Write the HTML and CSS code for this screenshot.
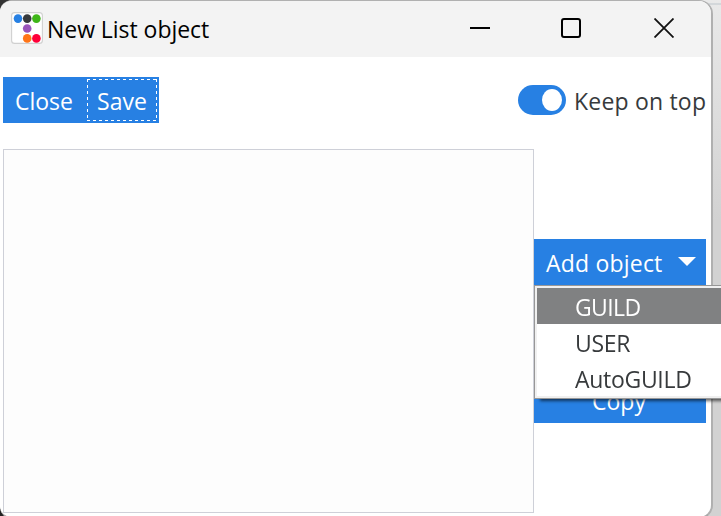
FILE: index.html
```html
<!DOCTYPE html>
<html lang="en">
<head>
<meta charset="utf-8">
<title>New List object</title>
<link rel="stylesheet" href="styles.css">
</head>
<body>
<div class="window">
  <header class="titlebar">
    <svg class="logo" width="32" height="32" viewBox="0 0 32 32">
      <rect x=".6" y=".6" width="30.8" height="30.8" rx="3" fill="#fff" stroke="#d0d0d0" stroke-width="1.1"/>
      <circle cx="7" cy="6.6" r="4.3" fill="#2780e3"/>
      <circle cx="16.2" cy="6.6" r="4.3" fill="#373a3c"/>
      <circle cx="25.4" cy="6.6" r="4.3" fill="#3fb618"/>
      <circle cx="16.2" cy="16.5" r="4.3" fill="#9954bb"/>
      <circle cx="16.2" cy="26.4" r="4.3" fill="#ff7518"/>
      <circle cx="25.4" cy="26.4" r="4.3" fill="#ff0039"/>
    </svg>
    <h1 class="title">New List object</h1>
    <div class="controls">
      <svg width="20" height="20" viewBox="0 0 20 20"><path d="M0 10H20" stroke="#000" stroke-width="2"/></svg>
      <svg width="20" height="20" viewBox="0 0 20 20"><rect x="1" y="1" width="18" height="18" rx="2" fill="none" stroke="#000" stroke-width="2"/></svg>
      <svg width="20" height="20" viewBox="0 0 20 20"><path d="M.5 .5L19.5 19.5M19.5 .5L.5 19.5" stroke="#111" stroke-width="1.8"/></svg>
    </div>
  </header>
  <div class="toolbar">
    <button class="btn close">Close</button>
    <button class="btn save"><span class="focus">Save</span></button>
    <label class="toggle"><span class="switch"><span class="knob"></span></span><span class="keep">Keep on top</span></label>
  </div>
  <main class="content">
    <div class="list"></div>
    <div class="actions">
      <div class="dropdown">
        <button class="btn add"><span class="add-text">Add object</span><svg width="18" height="9" viewBox="0 0 18 9"><path d="M0 0H18L9 9Z" fill="#fff"/></svg></button>
        <div class="menu">
          <div class="item active"><span class="guild">GUILD</span></div>
          <div class="item"><span class="user">USER</span></div>
          <div class="item"><span class="auto">AutoGUILD</span></div>
        </div>
      </div>
      <button class="btn copy">Copy</button>
    </div>
  </main>
</div>
</body>
</html>
```

FILE: styles.css
```css
* { box-sizing: border-box; }
body {
  margin: 0;
  width: 721px;
  height: 516px;
  overflow: hidden;
  background:
    linear-gradient(#d3d7da, #d3d7da) 700px 3px / 21px 2px no-repeat,
    linear-gradient(90deg, #333 412px, transparent 412px) 0 0 / 100% 10px no-repeat,
    linear-gradient(#222, #222) 0 500px / 20px 16px no-repeat,
    linear-gradient(#e9e9e9, #d2d2d2 220px);
  font-family: "Open Sans", "Noto Sans", sans-serif;
  font-size: 23px;
  color: #373a3c;
}
.window {
  width: 713px;
  height: 519px;
  border-right: 2px solid #b0b0b0;
  border-top: 1px solid #b0b0b0;
  border-bottom: 2px solid #a8a8a8;
  border-radius: 12px 14px 14px 12px;
  overflow: hidden;
  background: #fff;
  position: relative;
}
.window::before {
  content: "";
  position: absolute;
  left: 0;
  top: -1px;
  width: 412px;
  height: 1px;
  background: #333;
}
.titlebar {
  height: 56px;
  background: #f3f3f3;
  display: flex;
  align-items: flex-start;
  padding: 11px 37px 0 11px;
}
.logo { flex: none; }
.title {
  margin: 1px 0 0 4px;
  font-size: 23px;
  font-weight: 400;
  line-height: 32px;
  letter-spacing: -.04px;
  color: #000;
  white-space: nowrap;
}
.controls { display: flex; gap: 71px; margin: 6px 0 0 auto; }
.controls svg:last-child { margin-left: 2px; }
.toolbar { display: flex; height: 46px; margin: 20px 5px 0 3px; }
.btn {
  border: 0;
  border-radius: 0;
  padding: 0;
  background: #2780e3;
  color: #fff;
  font: inherit;
  line-height: 46px;
  text-align: center;
  white-space: nowrap;
}
.close { width: 82px; padding-top: 1px; }
.save { width: 74px; padding: 2px; }
.focus {
  --across: repeating-linear-gradient(90deg, #fff 0 3px, transparent 3px 6px);
  --down: repeating-linear-gradient(#fff 0 3px, transparent 3px 6px);
  display: block;
  width: 70px;
  height: 42px;
  line-height: 44px;
  background:
    var(--across) 0 0 / 100% 1px no-repeat,
    var(--across) 0 100% / 100% 1px no-repeat,
    var(--down) 0 0 / 1px 100% no-repeat,
    var(--down) 100% 0 / 1px 100% no-repeat;
}
.toggle { display: flex; margin-left: auto; align-items: flex-start; }
.switch {
  width: 48px;
  height: 30px;
  margin: 8px 8px 0 0;
  border-radius: 15px;
  background: #2780e3;
  display: flex;
  justify-content: flex-end;
  padding: 4px;
}
.knob { width: 20px; height: 22px; border-radius: 50%; background: #fff; }
.keep { width: 132px; line-height: 48px; letter-spacing: .2px; white-space: nowrap; }
.content { display: flex; margin: 26px 0 0 3px; }
.list { width: 531px; height: 364px; border: 1px solid #ced0d8; background: #fdfdfd; }
.actions { width: 172px; padding-top: 90px; }
.dropdown { position: relative; }
.add {
  display: flex;
  align-items: center;
  justify-content: space-between;
  width: 172px;
  height: 46px;
  padding: 2px 10px 0 12px;
}
.add-text { letter-spacing: .2px; }
.add svg { margin-top: -3px; }
.copy { display: block; width: 172px; height: 46px; margin-top: 92px; padding: 1px 2px 0 0; }
.menu {
  position: fixed;
  left: 534px;
  top: 285px;
  width: 200px;
  height: 114px;
  padding: 2px;
  background: #fff;
  border: 1px solid #979797;
  box-shadow: inset 0 0 0 2px #f0f0f0, 5px 3px 3px -1px rgba(0,0,0,.6);
}
.item { height: 36px; line-height: 38px; padding-left: 38px; white-space: nowrap; }
.active { background: #808182; color: #fff; }
.guild { letter-spacing: -.6px; }
.user { letter-spacing: -.3px; }
.auto { letter-spacing: -.3px; }
```
